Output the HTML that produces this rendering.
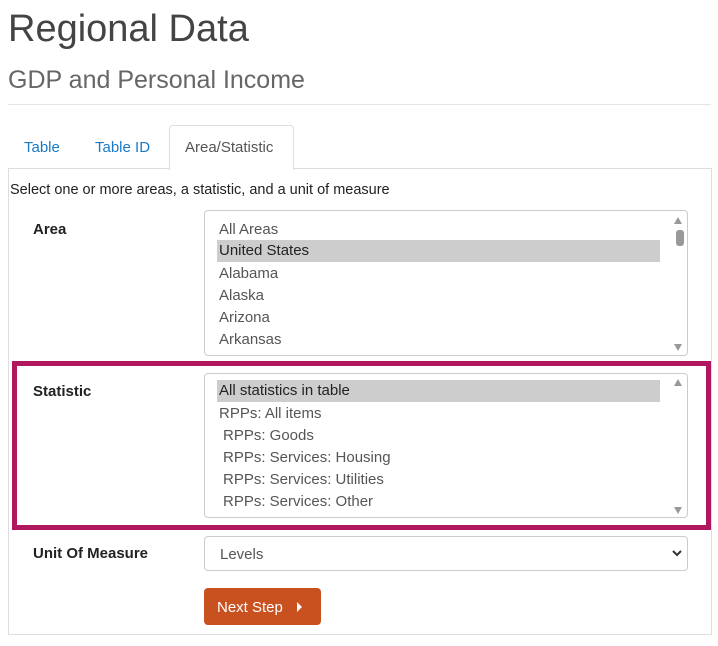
<!DOCTYPE html>
<html><head><style>
body{margin:0;width:718px;height:646px;background:#fff;font-family:"Liberation Sans",sans-serif;position:relative;overflow:hidden}
.a{position:absolute;white-space:nowrap}
.lb{position:absolute;left:204px;width:482px;border:1px solid #ccc;border-radius:4px;background:#fff;overflow:hidden}
.o{position:absolute;left:14px;font-size:15px;color:#555;line-height:22px}
.sel{background:#cdcdcd;width:441px;left:12px;padding-left:2px;color:#222}
.lab{font-weight:bold;font-size:15px;color:#222}
.tri{position:absolute;right:5px;width:0;height:0;border-left:4px solid transparent;border-right:4px solid transparent}
</style></head><body>
<div class="a" style="left:8px;top:8px;font-size:38px;color:#444">Regional Data</div>
<div class="a" style="left:8px;top:66px;font-size:25px;color:#666">GDP and Personal Income</div>
<div class="a" style="left:8px;top:104px;width:703px;border-top:1px solid #e5e5e5"></div>
<div class="a" style="left:24px;top:139px;font-size:15px;color:#1a7ac4">Table</div>
<div class="a" style="left:95px;top:139px;font-size:15px;color:#1a7ac4">Table ID</div>
<div class="a" style="left:8px;top:168px;width:702px;height:465px;border:1px solid #ddd"></div>
<div class="a" style="left:169px;top:125px;width:123px;height:44px;border:1px solid #ddd;border-bottom:none;border-radius:4px 4px 0 0;background:#fff"></div>
<div class="a" style="left:185px;top:139px;font-size:15px;color:#555">Area/Statistic</div>
<div class="a" style="left:10px;top:182px;font-size:14.5px;color:#222">Select one or more areas, a statistic, and a unit of measure</div>
<div class="a lab" style="left:33px;top:221px">Area</div>
<div class="lb" style="top:210px;height:144px">
<div class="o" style="top:8px">All Areas</div>
<div class="o sel" style="top:29px">United States</div>
<div class="o" style="top:52px">Alabama</div>
<div class="o" style="top:74px">Alaska</div>
<div class="o" style="top:96px">Arizona</div>
<div class="o" style="top:118px">Arkansas</div>
<div class="o" style="top:140px">California</div>
<div class="tri" style="top:6px;border-bottom:7px solid #999"></div>
<div style="position:absolute;right:3px;top:19px;width:8px;height:16px;background:#999;border-radius:3px"></div>
<div class="tri" style="top:133px;border-top:7px solid #999"></div>
</div>
<div class="a" style="left:12px;top:361px;width:689px;height:159px;border:5px solid #b0175e"></div>
<div class="a lab" style="left:33px;top:383px">Statistic</div>
<div class="lb" style="top:373px;height:143px">
<div class="o sel" style="top:6px;color:#222">All statistics in table</div>
<div class="o" style="top:29px">RPPs: All items</div>
<div class="o" style="top:51px;left:18px">RPPs: Goods</div>
<div class="o" style="top:73px;left:18px">RPPs: Services: Housing</div>
<div class="o" style="top:95px;left:18px">RPPs: Services: Utilities</div>
<div class="o" style="top:117px;left:18px">RPPs: Services: Other</div>
<div class="tri" style="top:5px;border-bottom:7px solid #999"></div>
<div class="tri" style="top:133px;border-top:7px solid #999"></div>
</div>
<div class="a lab" style="left:33px;top:545px">Unit Of Measure</div>
<div class="lb" style="top:536px;height:33px">
<div class="o" style="top:7px;left:15px">Levels</div>
<svg style="position:absolute;right:5px;top:12px" width="10" height="8"><path d="M1 2 L5 6 L9 2" stroke="#333" stroke-width="2" fill="none"/></svg>
</div>
<div class="a" style="left:204px;top:588px;width:117px;height:37px;background:#c8511f;border-radius:4px"></div>
<div class="a" style="left:217px;top:599px;font-size:15px;color:#fff">Next Step</div>
<div class="a" style="left:297px;top:602px;width:0;height:0;border-top:5px solid transparent;border-bottom:5px solid transparent;border-left:5px solid #fff"></div>
</body></html>
